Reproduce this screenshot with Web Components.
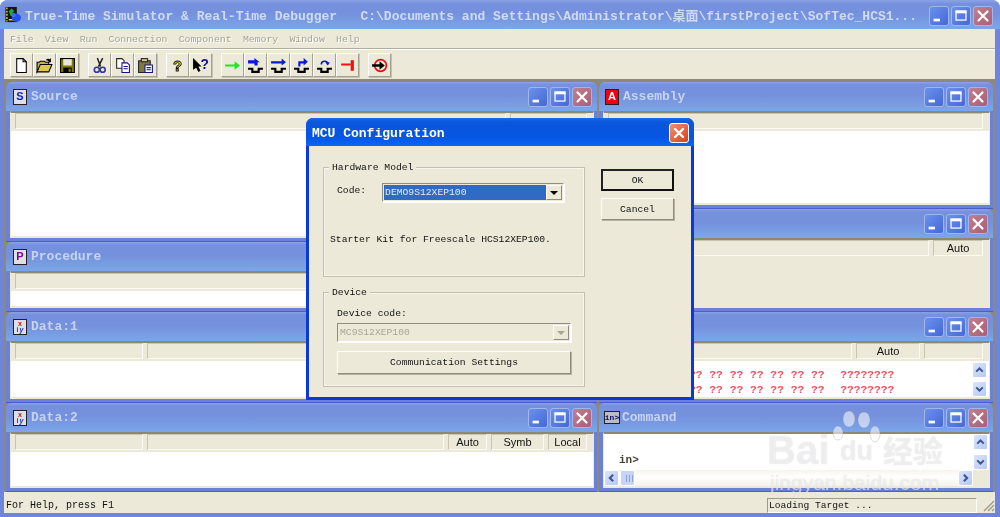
<!DOCTYPE html>
<html>
<head>
<meta charset="utf-8">
<title>True-Time Simulator</title>
<style>
  html, body { margin: 0; padding: 0; background: #fff; overflow: hidden; }
  body { width: 1000px; height: 517px; }
  svg { display: block; }
</style>
</head>
<body>
<app-frame>
  <span slot="caption">True-Time Simulator &amp; Real-Time Debugger&nbsp;&nbsp;&nbsp;C:\Documents and Settings\Administrator\桌面\firstProject\SofTec_HCS1...</span>

  <mdi-window slot="left" caption="Source" style="height:160px">
    <title-icon slot="icon" kind="s">S</title-icon>
    <strip-bar><strip-cell style="flex:1"></strip-cell><strip-cell style="width:77px"></strip-cell></strip-bar>
  </mdi-window>
  <mdi-window slot="left" caption="Procedure" style="height:70px">
    <title-icon slot="icon" kind="p">P</title-icon>
    <strip-bar><strip-cell style="flex:1"></strip-cell></strip-bar>
  </mdi-window>
  <mdi-window slot="left" caption="Data:1" style="height:91px">
    <title-icon slot="icon" kind="d"><b>x</b><span>i</span><i>y</i></title-icon>
    <strip-bar><strip-cell style="width:128px"></strip-cell><strip-cell style="flex:1"></strip-cell></strip-bar>
  </mdi-window>
  <mdi-window slot="left" caption="Data:2" style="height:89px">
    <title-icon slot="icon" kind="d"><b>x</b><span>i</span><i>y</i></title-icon>
    <strip-bar>
      <strip-cell style="width:128px"></strip-cell><strip-cell style="flex:1"></strip-cell>
      <strip-cell style="width:39px">Auto</strip-cell><strip-cell style="width:53px">Symb</strip-cell><strip-cell style="width:39px">Local</strip-cell>
    </strip-bar>
  </mdi-window>

  <mdi-window slot="right" caption="Assembly" style="height:127px">
    <title-icon slot="icon" kind="a" style="margin-left:-1px">A</title-icon>
    <strip-bar><strip-cell style="flex:1"></strip-cell></strip-bar>
  </mdi-window>
  <mdi-window slot="right" caption="Register" beige style="height:103px">
    <title-icon slot="icon" kind="s" style="margin-left:-1px">R</title-icon>
    <strip-bar><strip-cell style="flex:1"></strip-cell><strip-cell style="width:50px">Auto</strip-cell></strip-bar>
  </mdi-window>
  <mdi-window slot="right" caption="Memory" style="height:91px">
    <title-icon slot="icon" kind="s" style="margin-left:-1px">M</title-icon>
    <strip-bar><strip-cell style="flex:1"></strip-cell><strip-cell style="width:64px">Auto</strip-cell><strip-cell style="width:59px"></strip-cell></strip-bar>
    <memory-view></memory-view>
  </mdi-window>
  <mdi-window slot="right" caption="Command" style="height:89px">
    <title-icon slot="icon" kind="c" style="margin:0 -2px">in&gt;</title-icon>
    <command-view></command-view>
  </mdi-window>

  <mcu-dialog slot="over"></mcu-dialog>
  <baidu-mark slot="over"></baidu-mark>
</app-frame>

<script>
// the three caption buttons of a window
class winBtns extends HTMLElement {
  constructor() {
    super();
    this.shadow = this.attachShadow({ mode: "open" });
    const face = (name, glyph) => `<span class="b ${name}"><svg width="18" height="18" viewBox="0 0 20 20">${glyph}</svg></span>`;
    this.shadow.innerHTML = `
      <style>
        :host { display: flex; gap: 2px; flex: none; position: relative; z-index: 1; }
        .b { display: block; width: 20px; height: 20px; border: 1px solid #a3b6ec; border-radius: 3px; box-sizing: border-box;
             background: linear-gradient(135deg, #6a92ea, #4468d8); }
        .close { background: linear-gradient(135deg, #c0808f, #a95f74); }
        svg { display: block; }
      </style>
      ${face("min", `<rect x="4" y="13" width="7" height="3" fill="#fff"/>`)}
      ${face("max", `<rect x="4.5" y="4.5" width="11" height="10" fill="none" stroke="#fff" stroke-width="1.4"/><rect x="4" y="4" width="12" height="3" fill="#fff"/>`)}
      ${face("close", `<path d="M5 5 15 15M15 5 5 15" stroke="#fff" stroke-width="2.4" stroke-linecap="round"/>`)}`;
  }
}
customElements.define("win-btns", winBtns);

// small square letter icon in a title bar
class titleIcon extends HTMLElement {
  constructor() {
    super();
    this.shadow = this.attachShadow({ mode: "open" });
    this.shadow.innerHTML = `
      <style>
        :host { display: flex; width: 14px; height: 16px; align-items: center; justify-content: center; box-sizing: border-box; flex: none;
                border: 1px solid #222; background: #dfe0e4; overflow: hidden;
                font: bold 11px/1 "Liberation Sans", sans-serif; color: #1020d0; }
        :host([kind="a"]) { background: #f00010; color: #fff; }
        :host([kind="p"]) { color: #800090; }
        :host([kind="d"]) { flex-wrap: wrap; align-content: center; font-size: 7px; line-height: 6px; color: #d01010; gap: 0 1px; }
        :host([kind="c"]) { width: 16px; height: 13px; font: bold 8px/1 "Liberation Mono", monospace; color: #101060; background: #bcbcc8; }
        ::slotted(b) { width: 100%; text-align: center; }
        ::slotted(i) { color: #2030e0; }
      </style>
      <slot></slot>`;
  }
}
customElements.define("title-icon", titleIcon);

// child window inside the MDI area
class mdiWindow extends HTMLElement {
  constructor() {
    super();
    this.shadow = this.attachShadow({ mode: "open" });
  }

  connectedCallback() {
    const bg = this.hasAttribute("beige") ? "#ece9d8" : "#fff";
    this.shadow.innerHTML = `
      <style>
        :host { display: block; box-sizing: border-box; border-radius: 6px 6px 0 0; overflow: hidden; flex: none;
                background: #6b80da; padding: 0 3px 3px 4px; border-bottom: 1px solid #4f5ccb; }
        #bar { height: 29px; margin: 0 -3px 0 -4px; padding: 0 5px 0 7px; display: flex; align-items: center; gap: 3px; box-sizing: border-box;
               background: linear-gradient(#8aa3e6 0, #7590dc 3px, #7590dc 45%, #7ba6ea 100%);
               font: bold 13px "Liberation Mono", monospace; color: #c6d4f2; }
        #cap { flex: 1; margin-left: 1px; }
        #body { height: calc(100% - 29px); box-sizing: border-box; background: ${bg}; overflow: hidden;
                border-top: 2px solid #8c8872; border-left: 1px solid #ece9d8; border-right: 1px solid #ece9d8; border-bottom: 2px solid #ece9d8; position: relative; }
      </style>
      <div id="bar"><slot name="icon"></slot><span id="cap">${this.getAttribute("caption")}</span><win-btns></win-btns></div>
      <div id="body"><slot></slot></div>`;
  }
}
customElements.define("mdi-window", mdiWindow);

class stripBar extends HTMLElement {
  constructor() {
    super();
    this.shadow = this.attachShadow({ mode: "open" });
    this.shadow.innerHTML = `
      <style>
        :host { display: flex; gap: 4px; height: 18px; padding: 0 6px 2px 4px; box-sizing: border-box; background: #ece9d8; }
      </style>
      <slot></slot>`;
  }
}
customElements.define("strip-bar", stripBar);

class stripCell extends HTMLElement {
  constructor() {
    super();
    this.shadow = this.attachShadow({ mode: "open" });
    this.shadow.innerHTML = `
      <style>
        :host { display: flex; align-items: center; justify-content: center; box-sizing: border-box; height: 16px; min-width: 0;
                border: 1px solid; border-color: #c7c4b0 #fbfaf4 #fbfaf4 #c7c4b0; background: #ece9d8;
                font: 11px "Liberation Sans", sans-serif; color: #111; }
      </style>
      <slot></slot>`;
  }
}
customElements.define("strip-cell", stripCell);

class scrollBtn extends HTMLElement {
  constructor() {
    super();
    this.shadow = this.attachShadow({ mode: "open" });
  }

  connectedCallback() {
    const arrows = { up: "M4 10 8 6 12 10", down: "M4 6 8 10 12 6", left: "M10 4 6 8 10 12", right: "M6 4 10 8 6 12" };
    const dir = this.getAttribute("dir-to");
    this.shadow.innerHTML = `
      <style>
        :host { display: block; width: 15px; height: 16px; box-sizing: border-box; border: 1px solid #fff; border-radius: 2px;
                background: linear-gradient(135deg, #dbe5fb, #b5c9f4); flex: none; }
        svg { display: block; }
      </style>
      <svg width="13" height="14" viewBox="0 0 16 16"><path d="${arrows[dir]}" fill="none" stroke="#3d5590" stroke-width="2.6"/></svg>`;
  }
}
customElements.define("scroll-btn", scrollBtn);

class memoryView extends HTMLElement {
  constructor() {
    super();
    this.shadow = this.attachShadow({ mode: "open" });
    this.shadow.innerHTML = `
      <style>
        :host { display: flex; height: 38px; background: #fff; }
        #rows { flex: 1; padding: 7px 0 0 85px; font: bold 11.3px/15px "Liberation Mono", monospace; color: #f2505f; white-space: pre; overflow: hidden; }
        #rows span { margin-left: 2px; }
        #bar { width: 16px; margin-right: 1px; display: flex; flex-direction: column; gap: 3px; padding-top: 1px; }
      </style>
      <div id="rows">?? ?? ?? ?? ?? ?? ??  <span>????????</span>
?? ?? ?? ?? ?? ?? ??  <span>????????</span></div>
      <div id="bar"><scroll-btn dir-to="up"></scroll-btn><scroll-btn dir-to="down"></scroll-btn></div>`;
  }
}
customElements.define("memory-view", memoryView);

class commandView extends HTMLElement {
  constructor() {
    super();
    this.shadow = this.attachShadow({ mode: "open" });
    this.shadow.innerHTML = `
      <style>
        :host { display: grid; grid-template-columns: 1fr 16px; grid-template-rows: 36px 16px; height: 52px; background: #fff; }
        #txt { padding: 20px 0 0 15px; font: bold 11px/13px "Liberation Mono", monospace; color: #443; box-sizing: border-box; }
        #v { display: flex; flex-direction: column; gap: 4px; }
        #h { display: flex; align-items: center; background: linear-gradient(#f6f4ec, #fff 40%, #f4f2ea); }
        #thumb { width: 15px; height: 16px; margin-left: 1px; box-sizing: border-box; border: 1px solid #fff; border-radius: 2px;
                 background: repeating-linear-gradient(90deg, #c6d4f6 0 2px, #8aa0dc 2px 3px) 3px 4px / 9px 7px no-repeat, #c6d4f6; }
        #sp { flex: 1; }
        #corner { background: #ece9d8; }
      </style>
      <div id="txt">in&gt;</div>
      <div id="v"><scroll-btn dir-to="up"></scroll-btn><scroll-btn dir-to="down"></scroll-btn></div>
      <div id="h"><scroll-btn dir-to="left"></scroll-btn><div id="thumb"></div><div id="sp"></div><scroll-btn dir-to="right"></scroll-btn></div>
      <div id="corner"></div>`;
  }
}
customElements.define("command-view", commandView);

// raised toolbar button, icon comes through the slot
class toolBtn extends HTMLElement {
  constructor() {
    super();
    this.shadow = this.attachShadow({ mode: "open" });
    this.shadow.innerHTML = `
      <style>
        :host { display: flex; width: 23px; height: 24px; align-items: center; justify-content: center; box-sizing: border-box; flex: none;
                border: 1px solid; border-color: #fff #a3a193 #a3a193 #fff; box-shadow: 1px 1px 0 #c4c2b2; background: #ece9d8; }
        :host([gap]) { margin-left: 9px; }
      </style>
      <slot></slot>`;
  }
}
customElements.define("tool-btn", toolBtn);

class mainToolbar extends HTMLElement {
  constructor() {
    super();
    this.shadow = this.attachShadow({ mode: "open" });
    const trough = `<path d="M1 11h4v3h6v-3h4" fill="none" stroke="#000" stroke-width="2"/>`;
    const icon = (body) => `<svg width="17" height="17" viewBox="0 0 16 16">${body}</svg>`;
    this.shadow.innerHTML = `
      <style>
        :host { display: flex; height: 30px; padding: 3px 0 0 6px; box-sizing: border-box; background: #ece9d8; border-top: 1px solid #fff; }
        svg { display: block; overflow: visible; }
        text { font: bold 14px "Liberation Sans", sans-serif; }
      </style>
      <tool-btn>${icon(`<path d="M3.5 1.5h6l3 3v10h-9z" fill="#fff" stroke="#000"/><path d="M9.5 1.5v3h3" fill="none" stroke="#000"/>`)}</tool-btn>
      <tool-btn>${icon(`<path d="M1 14V5h2l1-1h4l1 1h3v2H5l-4 7z" fill="#c8b440" stroke="#000"/><path d="M1 14 4 7h11l-3 7z" fill="#dcc850" stroke="#000"/><path d="M9 3q2-2 4-1l1-1v4h-3l1-1q-1-1-3-1z" fill="#000"/>`)}</tool-btn>
      <tool-btn>${icon(`<path d="M1.5 1.5h13v13h-13z" fill="#807800" stroke="#000"/><rect x="4" y="2" width="8" height="6" fill="#e8e8d8"/><rect x="4" y="10" width="8" height="5" fill="#000"/><rect x="9" y="11" width="2" height="3" fill="#807800"/>`)}</tool-btn>
      <tool-btn gap>${icon(`<path d="M6 1 9 9M11 1 7 9" stroke="#222" stroke-width="1.4" fill="none"/><circle cx="5.5" cy="12" r="2.4" fill="none" stroke="#3434b0" stroke-width="1.5"/><circle cx="11" cy="12" r="2.4" fill="none" stroke="#3434b0" stroke-width="1.5"/>`)}</tool-btn>
      <tool-btn>${icon(`<path d="M2.5 1.5h5l2 2v7h-7z" fill="#fff" stroke="#222"/><path d="M7.5 5.5h5l2 2v7h-7z" fill="#fff" stroke="#12128a"/><path d="M9 9h4M9 11h4" stroke="#12128a"/>`)}</tool-btn>
      <tool-btn>${icon(`<path d="M1.5 3.5h11v11h-11z" fill="#807840" stroke="#222"/><rect x="4" y="1.5" width="6" height="3" fill="#c8c4a0" stroke="#222"/><path d="M7.5 7.5h7v7h-7z" fill="#fff" stroke="#12128a"/><path d="M9 10h4M9 12h4" stroke="#12128a"/>`)}</tool-btn>
      <tool-btn gap>${icon(`<text x="8" y="13" text-anchor="middle" fill="#e8d820" stroke="#111" stroke-width=".8">?</text>`)}</tool-btn>
      <tool-btn>${icon(`<path d="M1 1v11l3-2 2 4 2-1-2-4h3z" fill="#000"/><text x="12" y="11" text-anchor="middle" fill="#10108a" style="font-size:13px">?</text>`)}</tool-btn>
      <tool-btn gap>${icon(`<path d="M1 7h9V4l5 4-5 4V9H1z" fill="#10f020"/>`)}</tool-btn>
      <tool-btn>${icon(`${trough}<path d="M1 3h6V1l5 4-2 0v3H7V6H1z" fill="#0818d8"/>`)}</tool-btn>
      <tool-btn>${icon(`${trough}<path d="M1 4h10V1.5l4 3.5-4 3V6H1z" fill="#0818d8"/>`)}</tool-btn>
      <tool-btn>${icon(`${trough}<path d="M5 9V4h5V1l4 3.5-4 3.5V6H7v3z" fill="#0818d8"/>`)}</tool-btn>
      <tool-btn>${icon(`${trough}<path d="M5 7a3 3 0 1 1 6 0" fill="none" stroke="#0818d8" stroke-width="1.5"/><path d="M9 5l2 3 2-3z" fill="#0818d8"/>`)}</tool-btn>
      <tool-btn>${icon(`<path d="M2 6h9V8H2z" fill="#f01010"/><rect x="11" y="3" width="3" height="10" fill="#f01010"/>`)}</tool-btn>
      <tool-btn gap>${icon(`<circle cx="9" cy="8" r="5.5" fill="none" stroke="#e01010" stroke-width="1.6"/><path d="M1 6.8h7V4l5 4-5 4V9.2H1z" fill="#000"/>`)}</tool-btn>`;
  }
}
customElements.define("main-toolbar", mainToolbar);

class appFrame extends HTMLElement {
  constructor() {
    super();
    this.shadow = this.attachShadow({ mode: "open" });
    const items = ["File", "View", "Run", "Connection", "Component", "Memory", "Window", "Help"];
    this.shadow.innerHTML = `
      <style>
        :host { display: flex; flex-direction: column; position: relative; width: 1000px; height: 517px; box-sizing: border-box;
                border-radius: 8px 8px 0 0; overflow: hidden; background: #6f84dc; padding: 0 5px 4px 4px; filter: blur(.3px); }
        #title { height: 29px; flex: none; margin: 0 -5px 0 -4px; padding: 0 7px 0 5px; box-sizing: border-box; display: flex; align-items: center;
                 background: linear-gradient(#8aa3e6 0, #7590dc 4px, #7590dc 45%, #7ba6ea 100%);
                 font: bold 13px "Liberation Mono", "Noto Sans CJK SC", monospace; color: #d0dbf3; white-space: pre; }
        #caption { flex: 1; min-width: 0; margin-left: 3px; overflow: hidden; }
        #title win-btns { margin-top: 3px; }
        #menu { height: 20px; flex: none; display: flex; align-items: center; padding: 2px 0 0 6px; gap: 11.3px; background: #ece9d8; border-bottom: 1px solid #b0aea0;
                font: 9.8px "Liberation Mono", monospace; color: #a5a392; text-shadow: 1px 1px 0 #fff; box-sizing: border-box; }
        #mdi { flex: 1; display: flex; gap: 2px; padding: 2px 1px 0 2px; background: #8b8977; border-top: 1px solid #8b8977; min-height: 0; }
        .col { display: flex; flex-direction: column; }
        #left { width: 591px; }
        #right { width: 394px; }
        #status { height: 21px; flex: none; display: flex; align-items: center; background: #ece9d8; padding: 5px 0 0 2px; box-sizing: border-box;
                  font: 10px "Liberation Mono", monospace; color: #111; }
        #status .msg { width: 761px; }
        #status .cell { width: 210px; height: 15px; box-sizing: border-box; padding-left: 1px; line-height: 14px; font-size: 9.6px;
                        border: 1px solid; border-color: #9c9a88 #fff #fff #9c9a88; }
        #grip { width: 14px; height: 14px; margin: 0 0 0 4px; display: block; }
        #logo { display: block; flex: none; }
      </style>
      <div id="title">
        <svg id="logo" width="17" height="18" viewBox="0 0 18 18">
          <rect x="0.5" y="0.5" width="12" height="16" fill="#141410"/>
          <path d="M2 1v15" stroke="#d8c830" stroke-width="1.6" stroke-dasharray="2 1.4"/>
          <path d="M4 5 7 2l3 3-2 1 1 4H6z" fill="#18b030"/>
          <path d="M4 14h9" stroke="#e8d820" stroke-width="1.6"/>
          <ellipse cx="12" cy="12" rx="5" ry="4.2" fill="#2050f0"/><circle cx="9" cy="9" r="2.4" fill="#3870f0"/>
        </svg>
        <span id="caption"><slot name="caption"></slot></span>
        <win-btns></win-btns>
      </div>
      <div id="menu">${items.map((m) => `<span>${m}</span>`).join("")}</div>
      <main-toolbar></main-toolbar>
      <div id="mdi">
        <div class="col" id="left"><slot name="left"></slot></div>
        <div class="col" id="right"><slot name="right"></slot></div>
      </div>
      <div id="status">
        <span class="msg">For Help, press F1</span><span class="cell">Loading Target ...</span>
        <svg id="grip" viewBox="0 0 14 14"><path d="M13 3 3 13M13 7 7 13M13 11 11 13" stroke="#9c9a88" stroke-width="1.4"/></svg>
      </div>
      <slot name="over"></slot>`;
  }
}
customElements.define("app-frame", appFrame);

class groupBox extends HTMLElement {
  constructor() {
    super();
    this.shadow = this.attachShadow({ mode: "open" });
  }

  connectedCallback() {
    this.shadow.innerHTML = `
      <style>
        :host { display: block; position: relative; box-sizing: border-box; border: 1px solid #c2bfaa; box-shadow: 0 0 0 1px #f7f6ee inset; }
        #lb { position: absolute; left: 5px; top: -6px; padding: 0 3px; background: #ece9d8; line-height: 12px; }
      </style>
      <span id="lb">${this.getAttribute("label")}</span>
      <slot></slot>`;
  }
}
customElements.define("group-box", groupBox);

class xpButton extends HTMLElement {
  constructor() {
    super();
    this.shadow = this.attachShadow({ mode: "open" });
    this.shadow.innerHTML = `
      <style>
        :host { display: flex; align-items: center; justify-content: center; box-sizing: border-box; background: #ece9d8;
                border: 1px solid; border-color: #fff #8f8d80 #8f8d80 #fff; box-shadow: 1px 1px 0 #b4b2a2; }
        :host([default]) { border: 2px solid; border-color: #222 #111 #111 #222; box-shadow: none; }
      </style>
      <slot></slot>`;
  }
}
customElements.define("xp-button", xpButton);

class comboBox extends HTMLElement {
  constructor() {
    super();
    this.shadow = this.attachShadow({ mode: "open" });
    this.shadow.innerHTML = `
      <style>
        :host { display: flex; box-sizing: border-box; height: 19px; padding: 1px; border: 1px solid; border-color: #8f8d80 #fff #fff #8f8d80;
                background: #ece9d8; box-shadow: 1px 1px 0 #fff; }
        #val { flex: 1; line-height: 15px; padding-left: 1px; background: #316ac5; color: #e4ebf8; }
        #arrow { width: 16px; display: flex; align-items: center; justify-content: center; border: 1px solid; box-sizing: border-box;
                 border-color: #fff #8f8d80 #8f8d80 #fff; }
        #arrow i { border: 4px solid transparent; border-top: 4px solid #000; border-bottom: 0; }
        :host([disabled]) #val { background: #ece9d8; color: #a8a696; }
        :host([disabled]) #arrow i { border-top-color: #a8a696; }
      </style>
      <div id="val"><slot></slot></div><div id="arrow"><i></i></div>`;
  }
}
customElements.define("combo-box", comboBox);

// the modal over everything, placed at its place on the desktop
class mcuDialog extends HTMLElement {
  constructor() {
    super();
    this.shadow = this.attachShadow({ mode: "open" });
    this.shadow.innerHTML = `
      <style>
        :host { display: flex; flex-direction: column; position: absolute; z-index: 5; left: 306px; top: 118px; width: 388px; height: 282px; box-sizing: border-box;
                border-radius: 7px 7px 0 0; overflow: hidden; background: #0a3ad6; padding: 0 3px 3px 3px;
                font: 9.7px "Liberation Mono", monospace; color: #111; }
        #bar { height: 28px; flex: none; margin: 0 -3px; padding: 2px 5px 0 6px; display: flex; align-items: center; justify-content: space-between; box-sizing: border-box;
               background: linear-gradient(#1c68e8 0, #0a56dc 15%, #0656e4 70%, #0a68f4 100%); font: bold 13px "Liberation Mono", monospace; color: #fff; }
        #close { width: 20px; height: 20px; box-sizing: border-box; border: 1px solid #fff; border-radius: 3px; background: linear-gradient(135deg, #f09070, #d8401c); }
        #close svg { display: block; }
        #body { flex: 1; background: #ece9d8; display: flex; padding: 21px 17px 9px 14px; gap: 16px; box-sizing: border-box; }
        #groups { width: 262px; display: flex; flex-direction: column; gap: 15px; }
        #hw { height: 110px; padding: 16px 0 0 13px; box-sizing: border-box; }
        #dev { height: 95px; padding: 15px 13px 0 13px; box-sizing: border-box; }
        .row { display: flex; align-items: flex-start; gap: 15px; }
        .row span { margin-top: 1px; }
        #hw combo-box { width: 182px; margin: -1px 0 0 1px; }
        #kit { margin: 32px 0 0 -7px; }
        #dev combo-box { margin-top: 4px; }
        #comm { height: 23px; margin-top: 9px; }
        #btns { width: 73px; display: flex; flex-direction: column; gap: 7px; padding-top: 2px; }
        #btns xp-button { height: 22px; }
      </style>
      <div id="bar"><span>MCU Configuration</span>
        <div id="close"><svg width="18" height="18" viewBox="0 0 18 18"><path d="M5 5 13 13M13 5 5 13" stroke="#fff" stroke-width="2.4" stroke-linecap="round"/></svg></div>
      </div>
      <div id="body">
        <div id="groups">
          <group-box id="hw" label="Hardware Model">
            <div class="row"><span>Code:</span><combo-box>DEMO9S12XEP100</combo-box></div>
            <div id="kit">Starter Kit for Freescale HCS12XEP100.</div>
          </group-box>
          <group-box id="dev" label="Device">
            <div>Device code:</div>
            <combo-box disabled>MC9S12XEP100</combo-box>
            <xp-button id="comm">Communication Settings</xp-button>
          </group-box>
        </div>
        <div id="btns"><xp-button default>OK</xp-button><xp-button>Cancel</xp-button></div>
      </div>`;
  }
}
customElements.define("mcu-dialog", mcuDialog);

// site watermark, bottom right corner
class baiduMark extends HTMLElement {
  constructor() {
    super();
    this.shadow = this.attachShadow({ mode: "open" });
    this.shadow.innerHTML = `
      <style>
        :host { display: block; position: absolute; z-index: 6; left: 766px; top: 410px; width: 184px; height: 86px; pointer-events: none;
                font-family: "Liberation Sans", sans-serif; color: rgba(255,255,255,.6); text-shadow: 0 0 1px rgba(110,110,120,.3); }
        span { position: absolute; white-space: nowrap; }
        svg { position: absolute; left: 64px; top: 0; }
        #bai { left: 1px; top: 20px; font: bold 40px/1 "Liberation Sans", sans-serif; }
        #du { left: 74px; top: 28px; font: bold 27px/1 "Liberation Sans", sans-serif; }
        #jy { left: 117px; top: 24px; font: bold 30px/1 "Noto Sans CJK SC", sans-serif; }
        #url { left: 4px; top: 62px; font: 21px/1 "Liberation Sans", sans-serif; }
      </style>
      <svg width="52" height="52" viewBox="0 0 52 52" fill="rgba(255,255,255,.55)" stroke="rgba(140,140,150,.3)">
        <ellipse cx="19" cy="9" rx="6" ry="8"/><ellipse cx="34" cy="10" rx="6" ry="8"/><ellipse cx="8" cy="23" rx="5" ry="7"/><ellipse cx="45" cy="24" rx="5" ry="8"/>
      </svg>
      <span id="bai">Bai</span><span id="du">du</span><span id="jy">经验</span><span id="url">jingyan.baidu.com</span>`;
  }
}
customElements.define("baidu-mark", baiduMark);
</script>
</body>
</html>
